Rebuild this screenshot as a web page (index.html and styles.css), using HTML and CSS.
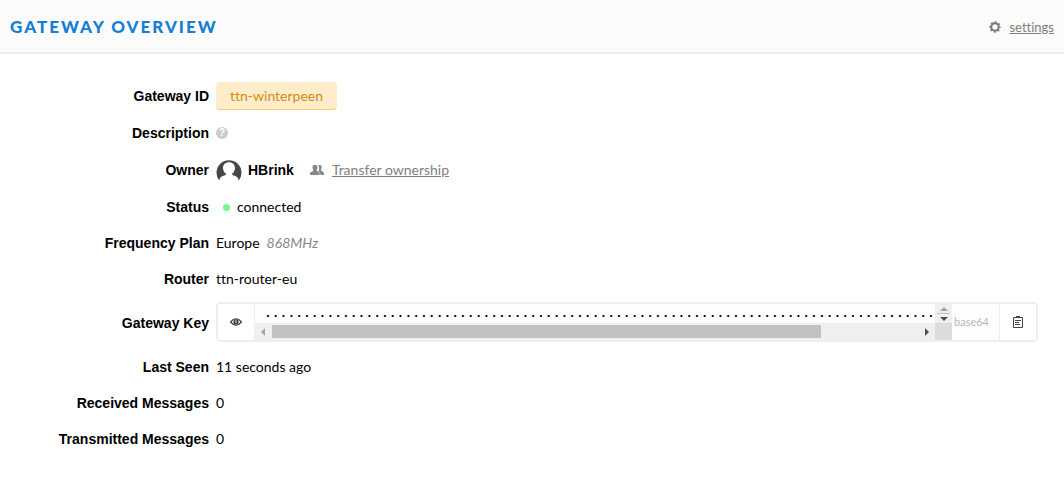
FILE: index.html
```html
<!DOCTYPE html>
<html lang="en">
<head>
  <meta charset="UTF-8" />
  <meta name="viewport" content="width=device-width, initial-scale=1.0"/>
  <title>Gateway Overview</title>
  <link rel="stylesheet" href="styles.css">
</head>
<body>

  <header class="header">
    <h1>Gateway Overview</h1>
    <a href="#" class="settings">
      <svg class="gear" viewBox="0 0 12 12" width="12" height="12">
        <circle cx="6" cy="6" r="3.7" fill="none" stroke="#777" stroke-width="2"/>
        <circle cx="6" cy="6" r="5" fill="none" stroke="#777" stroke-width="1.4" stroke-dasharray="1.96 1.96" stroke-dashoffset="0.98"/>
      </svg>
      <span class="link">settings</span>
    </a>
  </header>

  <dl class="details">
    <div class="row row-tall">
      <dt>Gateway ID</dt>
      <dd><span class="tag">ttn-winterpeen</span></dd>
    </div>

    <div class="row">
      <dt>Description</dt>
      <dd>
        <button class="help" type="button" aria-label="Help">?</button>
      </dd>
    </div>

    <div class="row row-tall">
      <dt>Owner</dt>
      <dd>
        <svg class="avatar" viewBox="0 0 26 24" width="26" height="24">
          <path fill="#474747" fill-rule="evenodd" d="M3.200 22.500A12.500 12.500 0 1 1 22.800 22.500C22.300 19.500 20.500 18.300 17 17.300C15.900 17 15.700 16.200 16.300 15.500C18 14.200 19 12.200 19 10C19 6.600 16.600 4.200 13 4.200S7 6.600 7 10C7 12.200 8 14.200 9.700 15.500C10.300 16.200 10.100 17 9 17.300C5.500 18.300 3.700 19.500 3.200 22.500Z"/>
        </svg>
        <strong class="username">HBrink</strong>
        <a href="#" class="transfer">
          <svg viewBox="0 0 14 12" width="14" height="12" fill="#888">
            <path d="M9 1C11 .5 12 2 11.700 3.800C11.500 5 11 5.600 11 6.300C11.500 7.300 14 7.500 14 9.500V11H10.500C10.500 9 9.500 8.500 8.300 7.800C9.300 6 9.500 3 8.300 1.400Z"/>
            <path d="M5 .8C7 .8 7.700 2.200 7.500 4C7.400 5 6.700 5.800 6.700 6.500C7 7.500 9.700 7.700 9.700 9.800V11H0V9.800C0 7.700 3 7.500 3.300 6.500C3.300 5.800 2.600 5 2.500 4C2.300 2.200 3 .8 5 .8Z"/>
          </svg>
          <span class="link">Transfer ownership</span>
        </a>
      </dd>
    </div>

    <div class="row">
      <dt>Status</dt>
      <dd><span class="dot"></span>connected</dd>
    </div>

    <div class="row">
      <dt>Frequency Plan</dt>
      <dd>Europe <em class="freq">868MHz</em></dd>
    </div>

    <div class="row">
      <dt>Router</dt>
      <dd>ttn-router-eu</dd>
    </div>

    <div class="row row-key">
      <dt><label for="key">Gateway Key</label></dt>
      <dd>
        <div class="key">
          <button class="key-btn" type="button" aria-label="Show key">
            <svg viewBox="0 0 12 8" width="12" height="8">
              <path d="M.5 4Q6 -2.500 11.500 4Q6 10.500 .5 4Z" fill="none" stroke="#444" stroke-width="1.200"/>
              <circle cx="6" cy="4" r="2.700" fill="#444"/>
              <path d="M5.700 2.300V4.200H7" fill="none" stroke="#fff" stroke-width=".8"/>
            </svg>
          </button>
          <div class="scroller">
            <input id="key" class="key-input" type="text" readonly value="......................................................................................">
            <div class="scroll-y">
              <i class="up"></i>
              <i class="split"></i>
              <i class="down"></i>
            </div>
            <div class="scroll-x">
              <i class="left"></i>
              <div class="track"><div class="thumb"></div></div>
              <i class="right"></i>
            </div>
            <div class="corner"></div>
          </div>
          <span class="format">base64</span>
          <button class="key-btn key-copy" type="button" aria-label="Copy key">
            <svg viewBox="0 0 10 12" width="10" height="12" fill="none" stroke="#444">
              <path d="M.5 1.500H9.500V11.500H.5Z"/>
              <path d="M3 1H7" stroke-width="2"/>
              <path d="M2 4.500H8M2 6.500H6M2 8.500H7"/>
            </svg>
          </button>
        </div>
      </dd>
    </div>

    <div class="row">
      <dt>Last Seen</dt>
      <dd>11 seconds ago</dd>
    </div>

    <div class="row">
      <dt>Received Messages</dt>
      <dd>0</dd>
    </div>

    <div class="row">
      <dt>Transmitted Messages</dt>
      <dd>0</dd>
    </div>
  </dl>

</body>
</html>
```
FILE: styles.css
```css
body {
  font-family: Lato, sans-serif;
  font-size: 14px;
  font-variant-ligatures: none;
  line-height: 20px;
  background: #fff;
  margin: 0;
  color: #000;
}

button {
  border: none;
  padding: 0;
  background: none;
  cursor: pointer;
}

svg {
  flex: none;
}

.header {
  display: flex;
  align-items: center;
  justify-content: space-between;
  padding: 17px 10px 15px;
  background: #fbfbfb;
  border-bottom: 2px solid #ececec;
}

.header h1 {
  margin: 0;
  font-size: 17px;
  font-weight: 900;
  line-height: 20px;
  letter-spacing: 2px;
  text-transform: uppercase;
  color: #147fd2;
}

.settings,
.transfer {
  display: flex;
  align-items: center;
  gap: 8px;
  color: #808080;
  text-decoration: none;
}

.settings {
  font-size: 13px;
}

.link {
  text-decoration: underline;
}

.details {
  display: flex;
  flex-direction: column;
  gap: 10px;
  margin: 0;
  padding: 28px 26px 28px 0;
}

.row {
  display: grid;
  grid-template-columns: 209px 1fr;
  column-gap: 7px;
  align-items: center;
  min-height: 26px;
}

.row-tall {
  min-height: 28px;
}

.row-key {
  min-height: 42px;
}

.row-key dd {
  align-self: start;
}

dt {
  font-family: "Liberation Sans", Arial, sans-serif;
  font-weight: bold;
  text-align: right;
}

dd {
  display: flex;
  align-items: center;
  margin: 0;
}

.tag {
  padding: 4px 14px 3px;
  background: #ffeccb;
  border-bottom: 1px solid #fbca6c;
  border-radius: 4px;
  color: #d08d0f;
}

.help {
  width: 12px;
  height: 12px;
  border-radius: 50%;
  background: #ccc;
  color: #fff;
  font: bold 10px/12px "Liberation Sans", Arial, sans-serif;
}

.username {
  margin: 0 16px 0 6px;
  font-family: "Liberation Sans", Arial, sans-serif;
}

.dot {
  width: 7px;
  height: 7px;
  margin: 0 7px;
  border-radius: 50%;
  background: #78f78a;
}

.freq {
  margin-left: 7px;
  color: #888;
}

/* Gateway key field */
.key {
  flex: 1;
  display: flex;
  height: 36px;
  border: 2px solid #eee;
  border-radius: 5px;
  background: #fdfdfd;
  overflow: hidden;
}

.key-btn {
  display: flex;
  align-items: center;
  justify-content: center;
  width: 37px;
  background: #fff;
  border-right: 1px solid #eee;
}

.key-copy {
  border-right: none;
  border-left: 1px solid #eee;
}

.scroller {
  flex: 1;
  display: grid;
  grid-template-columns: 1fr 17px;
  grid-template-rows: 19px 17px;
}

.key-input {
  min-width: 0;
  padding: 0 0 0 9px;
  border: none;
  outline: none;
  background: none;
  font: bold 13px/19px "Liberation Mono", monospace;
  color: #000;
}

.scroll-y {
  display: flex;
  flex-direction: column;
  align-items: center;
  justify-content: space-evenly;
  background: #f0f0f0;
}

.scroll-x {
  display: flex;
  align-items: center;
  justify-content: space-between;
  padding: 0 6px;
  background: #f0f0f0;
}

.track {
  flex: 1;
  margin: 0 7px;
}

.thumb {
  width: 85%;
  height: 13px;
  background: #c1c1c1;
}

.split {
  width: 13px;
  height: 1px;
  background: #c1c1c1;
}

.corner {
  background: #dcdcdc;
}

.up,
.down,
.left,
.right {
  border: 4px solid transparent;
}

.up {
  border-top: none;
  border-bottom-color: #a3a3a3;
}

.down {
  border-bottom: none;
  border-top-color: #505050;
}

.left {
  border-left: none;
  border-right-color: #a3a3a3;
}

.right {
  border-right: none;
  border-left-color: #505050;
}

.format {
  width: 45px;
  padding-left: 2px;
  align-self: center;
  font-size: 11px;
  color: #b8b8b8;
}
```
